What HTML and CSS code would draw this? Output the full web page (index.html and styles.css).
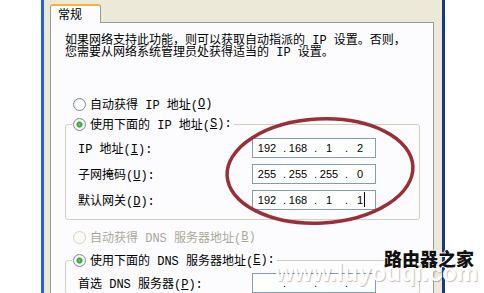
FILE: index.html
```html
<!DOCTYPE html>
<html lang="zh-CN">
<head>
    <meta charset="UTF-8">
    <title>Internet 协议 (TCP/IP) 属性</title>
    <link rel="stylesheet" href="styles.css">
</head>
<body>
<div class="window">
    <div class="tabs">
        <div class="tab">常规</div>
    </div>
    <div class="panel">
        <p class="intro">如果网络支持此功能，则可以获取自动指派的 IP 设置。否则，<br>您需要从网络系统管理员处获得适当的 IP 设置。</p>

        <div class="radio-row">
            <span class="radio"></span>自动获得 IP 地址(<u>O</u>)
        </div>
        <fieldset class="group">
            <legend><span class="radio checked"></span>使用下面的 IP 地址(<u>S</u>):</legend>
            <div class="field-row">
                <label>IP 地址(<u>I</u>):</label>
                <div class="ip-box">
                    <span class="seg"><span class="num">192</span><span class="dot">.</span></span>
                    <span class="seg"><span class="num">168</span><span class="dot">.</span></span>
                    <span class="seg"><span class="num">1</span><span class="dot">.</span></span>
                    <span class="seg"><span class="num">2</span></span>
                </div>
            </div>
            <div class="field-row">
                <label>子网掩码(<u>U</u>):</label>
                <div class="ip-box">
                    <span class="seg"><span class="num">255</span><span class="dot">.</span></span>
                    <span class="seg"><span class="num">255</span><span class="dot">.</span></span>
                    <span class="seg"><span class="num">255</span><span class="dot">.</span></span>
                    <span class="seg"><span class="num">0</span></span>
                </div>
            </div>
            <div class="field-row">
                <label>默认网关(<u>D</u>):</label>
                <div class="ip-box">
                    <span class="seg"><span class="num">192</span><span class="dot">.</span></span>
                    <span class="seg"><span class="num">168</span><span class="dot">.</span></span>
                    <span class="seg"><span class="num">1</span><span class="dot">.</span></span>
                    <span class="seg"><span class="num">1<span class="caret"></span></span></span>
                </div>
            </div>
        </fieldset>

        <div class="radio-row disabled">
            <span class="radio"></span>自动获得 DNS 服务器地址(<u>B</u>)
        </div>
        <fieldset class="group dns">
            <legend><span class="radio checked"></span>使用下面的 DNS 服务器地址(<u>E</u>):</legend>
            <div class="field-row">
                <label>首选 DNS 服务器(<u>P</u>):</label>
                <div class="ip-box">
                    <span class="seg"><span class="num"></span><span class="dot">.</span></span>
                    <span class="seg"><span class="num"></span><span class="dot">.</span></span>
                    <span class="seg"><span class="num"></span><span class="dot">.</span></span>
                    <span class="seg"><span class="num"></span></span>
                </div>
            </div>
        </fieldset>
    </div>
</div>

<!-- red marker drawn over the screenshot -->
<svg class="marker" width="484" height="293" viewBox="0 0 484 293">
    <ellipse cx="320" cy="171" rx="93" ry="52" transform="rotate(-3 320 171)"
             fill="none" stroke="#9b2f38" stroke-width="3.5"/>
</svg>

<div class="watermark">
    <div class="wm-cn">路由器之家</div>
    <div class="wm-url">www.luyouqi.com</div>
</div>
</body>
</html>
```

FILE: styles.css
```css
body {
    margin: 0;
    width: 484px;
    height: 293px;
    overflow: hidden;
    position: relative;
    background-color: #ffffff;
    font-family: "Liberation Mono", "Noto Sans CJK SC", monospace;
    font-size: 12px;
    color: #000000;
}

.window {
    display: flex;
    flex-direction: column;
    margin-left: 41px;
    width: 404px;
    height: 293px;
    overflow: hidden;
    padding: 4px 8px 0 6px;
    box-sizing: border-box;
    background-color: #ece9d8;
    border-left: 3px solid #2f62c8;
    border-right: 3px solid #17388a;
}

.tabs {
    display: flex;
}

.tab {
    width: 51px;
    height: 19px;
    box-sizing: border-box;
    padding: 3px 0 0 7px;
    line-height: 14px;
    background-color: #fcfcfe;
    border: 1px solid #919b9c;
    border-top: 2px solid #f7b13a;
    border-bottom: none;
    border-radius: 3px 3px 0 0;
    margin-bottom: -1px;
    position: relative;
    z-index: 1;
}

.panel {
    flex: 1;
    min-height: 0;
    overflow: hidden;
    background-color: #fcfcfe;
    border: 1px solid #919b9c;
    border-bottom: none;
    padding: 12px 13px 0 14px;
}

.intro {
    margin: 0;
    line-height: 12px;
}

.radio-row {
    display: flex;
    align-items: center;
    height: 20px;
    padding-left: 8px;
    margin-top: 35px;
}

.radio-row.disabled {
    color: #aca899;
    margin-top: 7px;
}

.radio {
    width: 13px;
    height: 13px;
    box-sizing: border-box;
    border: 1px solid #7b8a99;
    border-radius: 50%;
    background: radial-gradient(circle at 60% 60%, #ffffff 40%, #dcdcd4 100%);
    margin-right: 4px;
    flex-shrink: 0;
}

.radio.checked {
    background: radial-gradient(circle, #7bd67b 0, #2a9a2a 2.5px, #ffffff 3.5px, #e4e4dc 100%);
}

.radio-row.disabled .radio {
    border-color: #d6d3c6;
    background: #fafaf6;
}

.group {
    margin: 0;
    padding: 0 8px 9px 6px;
    border: 1px solid #d0d0bf;
    border-radius: 3px;
}

.group legend {
    display: flex;
    align-items: center;
    height: 20px;
    padding: 0 2px 0 1px;
}

.group.dns {
    margin-top: 3px;
    padding-bottom: 0;
}

.field-row {
    display: flex;
    align-items: center;
    height: 20px;
    padding-left: 6px;
    margin-top: 6px;
}

.field-row:first-of-type {
    margin-top: 4px;
}

.group.dns .field-row {
    margin-top: 3px;
}

.field-row label {
    width: 174px;
}

.ip-box {
    display: flex;
    align-items: center;
    width: 124px;
    height: 20px;
    box-sizing: border-box;
    border: 1px solid #7f9db9;
    background-color: #ffffff;
    padding-left: 2px;
    font-family: "Liberation Sans", sans-serif;
    font-size: 11px;
}

.seg {
    display: flex;
    width: 31px;
}

.num {
    width: 24px;
    text-align: center;
    position: relative;
}

.dot {
    width: 7px;
    text-align: right;
}

.caret {
    position: absolute;
    top: -2px;
    margin-left: 1px;
    width: 1px;
    height: 15px;
    background-color: #000000;
}

.marker {
    position: absolute;
    left: 0;
    top: 0;
    pointer-events: none;
}

.watermark {
    position: absolute;
    right: 6px;
    top: 248px;
    text-align: right;
}

.wm-cn {
    font-family: "Noto Sans CJK SC", sans-serif;
    font-weight: 900;
    font-size: 18px;
    line-height: 20px;
    color: #111111;
    padding-right: 4px;
    text-shadow: 1px 0 0 #fff, -1px 0 0 #fff, 0 1px 0 #fff, 0 -1px 0 #fff;
}

.wm-url {
    margin-top: -8px;
    font-family: "Liberation Sans", sans-serif;
    font-weight: bold;
    font-size: 24px;
    line-height: 26px;
    color: #ffffff;
    text-shadow: 1px 1px 1px rgba(0, 0, 0, 0.25);
}
```
